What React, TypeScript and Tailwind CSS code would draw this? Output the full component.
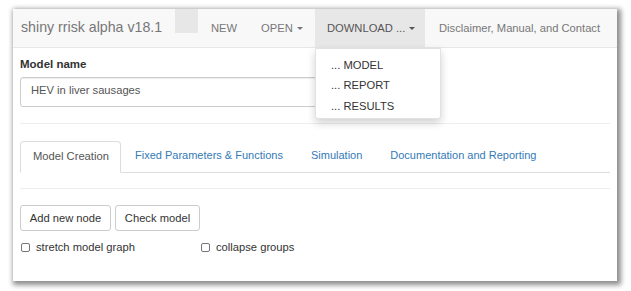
const FONT = "font-['Liberation_Sans',Arial,sans-serif]";

const TABS = [
  "Model Creation",
  "Fixed Parameters & Functions",
  "Simulation",
  "Documentation and Reporting",
];

export default function App() {
  return (
    <div className={`h-[291px] w-[631px] overflow-hidden bg-white pl-[13px] pt-[9px] ${FONT}`}>
      <div className="relative h-[272px] w-[604px] bg-white shadow-[2px_2px_5px_2px_rgba(0,0,0,0.45)]">
        <Navbar />
        <div className="px-[7px]">
          <p className="mt-[9px] text-[11.5px] font-bold leading-[14px] text-[#333]">
            Model name
          </p>
          <div className="mt-[6px] flex h-[30px] w-[390px] items-center rounded-[3px] border border-[#ccc] px-[10px] pb-[4px] text-[11.2px] text-[#555] shadow-[inset_0_1px_1px_rgba(0,0,0,0.075)]">
            HEV in liver sausages
          </div>
          <div className="mt-[16px] h-px bg-[#eee]" />

          <div className="mt-[17px] flex border-b border-[#ddd]">
            {TABS.map((tab, index) =>
              index === 0 ? (
                <div
                  key={tab}
                  className="-mb-px flex h-[32px] w-[101px] items-center rounded-t-[4px] border border-b-white border-[#ddd] bg-white pb-[2px] pl-[12px] text-[11.2px] text-[#555]"
                >
                  {tab}
                </div>
              ) : (
                <div
                  key={tab}
                  className="flex h-[31px] items-center px-[14px] pb-[2px] text-[11px] text-[#337ab7]"
                >
                  {tab}
                </div>
              ),
            )}
          </div>
          <div className="mt-[15px] h-px bg-[#eee]" />

          <div className="mt-[16px] flex gap-[4px]">
            <Button label="Add new node" width="w-[91px]" />
            <Button label="Check model" width="w-[85px]" />
          </div>

          <div className="mt-[9px] flex h-[14px] items-center text-[11.2px] text-[#333]">
            <Checkbox label="stretch model graph" width="w-[180px]" />
            <Checkbox label="collapse groups" width="w-[120px]" />
          </div>
        </div>

        <DownloadMenu />
      </div>
    </div>
  );
}

function Navbar() {
  return (
    <div className="flex h-[39px] items-stretch border-b border-[#e7e7e7] bg-[#f8f8f8] text-[11.2px] text-[#777]">
      <div className="flex w-[162px] items-center pl-[8px] text-[14.2px] text-[#777]">
        shiny rrisk alpha v18.1
      </div>
      <div className="h-[24px] w-[23px] bg-[#e7e7e7]" />
      <div className="flex w-[63px] items-center pl-[13px]">NEW</div>
      <div className="flex w-[54px] items-center gap-[4px]">
        OPEN <Caret />
      </div>
      <div className="flex w-[110px] items-center gap-[4px] bg-[#e7e7e7] pl-[12px] text-[#555]">
        DOWNLOAD ... <Caret />
      </div>
      <div className="flex items-center pl-[14px]">
        Disclaimer, Manual, and Contact
      </div>
    </div>
  );
}

function Caret() {
  return (
    <span className="inline-block h-0 w-0 border-x-[3px] border-t-[3px] border-x-transparent border-t-current" />
  );
}

function DownloadMenu() {
  return (
    <div className="absolute left-[302px] top-[39px] h-[71px] w-[126px] rounded-b-[3px] border border-[#e2e2e2] bg-white pt-[6px] text-[11.2px] text-[#333] shadow-[0_4px_9px_rgba(0,0,0,0.18)]">
      {["... MODEL", "... REPORT", "... RESULTS"].map((item) => (
        <div key={item} className="flex h-[20.5px] items-center pl-[15px]">
          {item}
        </div>
      ))}
    </div>
  );
}

function Button({ label, width }: { label: string; width: string }) {
  return (
    <div
      className={`flex h-[26px] ${width} items-center justify-center rounded-[3px] border border-[#ccc] bg-white text-[11.2px] text-[#333]`}
    >
      {label}
    </div>
  );
}

function Checkbox({ label, width }: { label: string; width: string }) {
  return (
    <div className={`flex ${width} items-center gap-[6px] pl-px`}>
      <span className="h-[9px] w-[9px] rounded-[2px] border border-[#767676] bg-white" />
      <span>{label}</span>
    </div>
  );
}
